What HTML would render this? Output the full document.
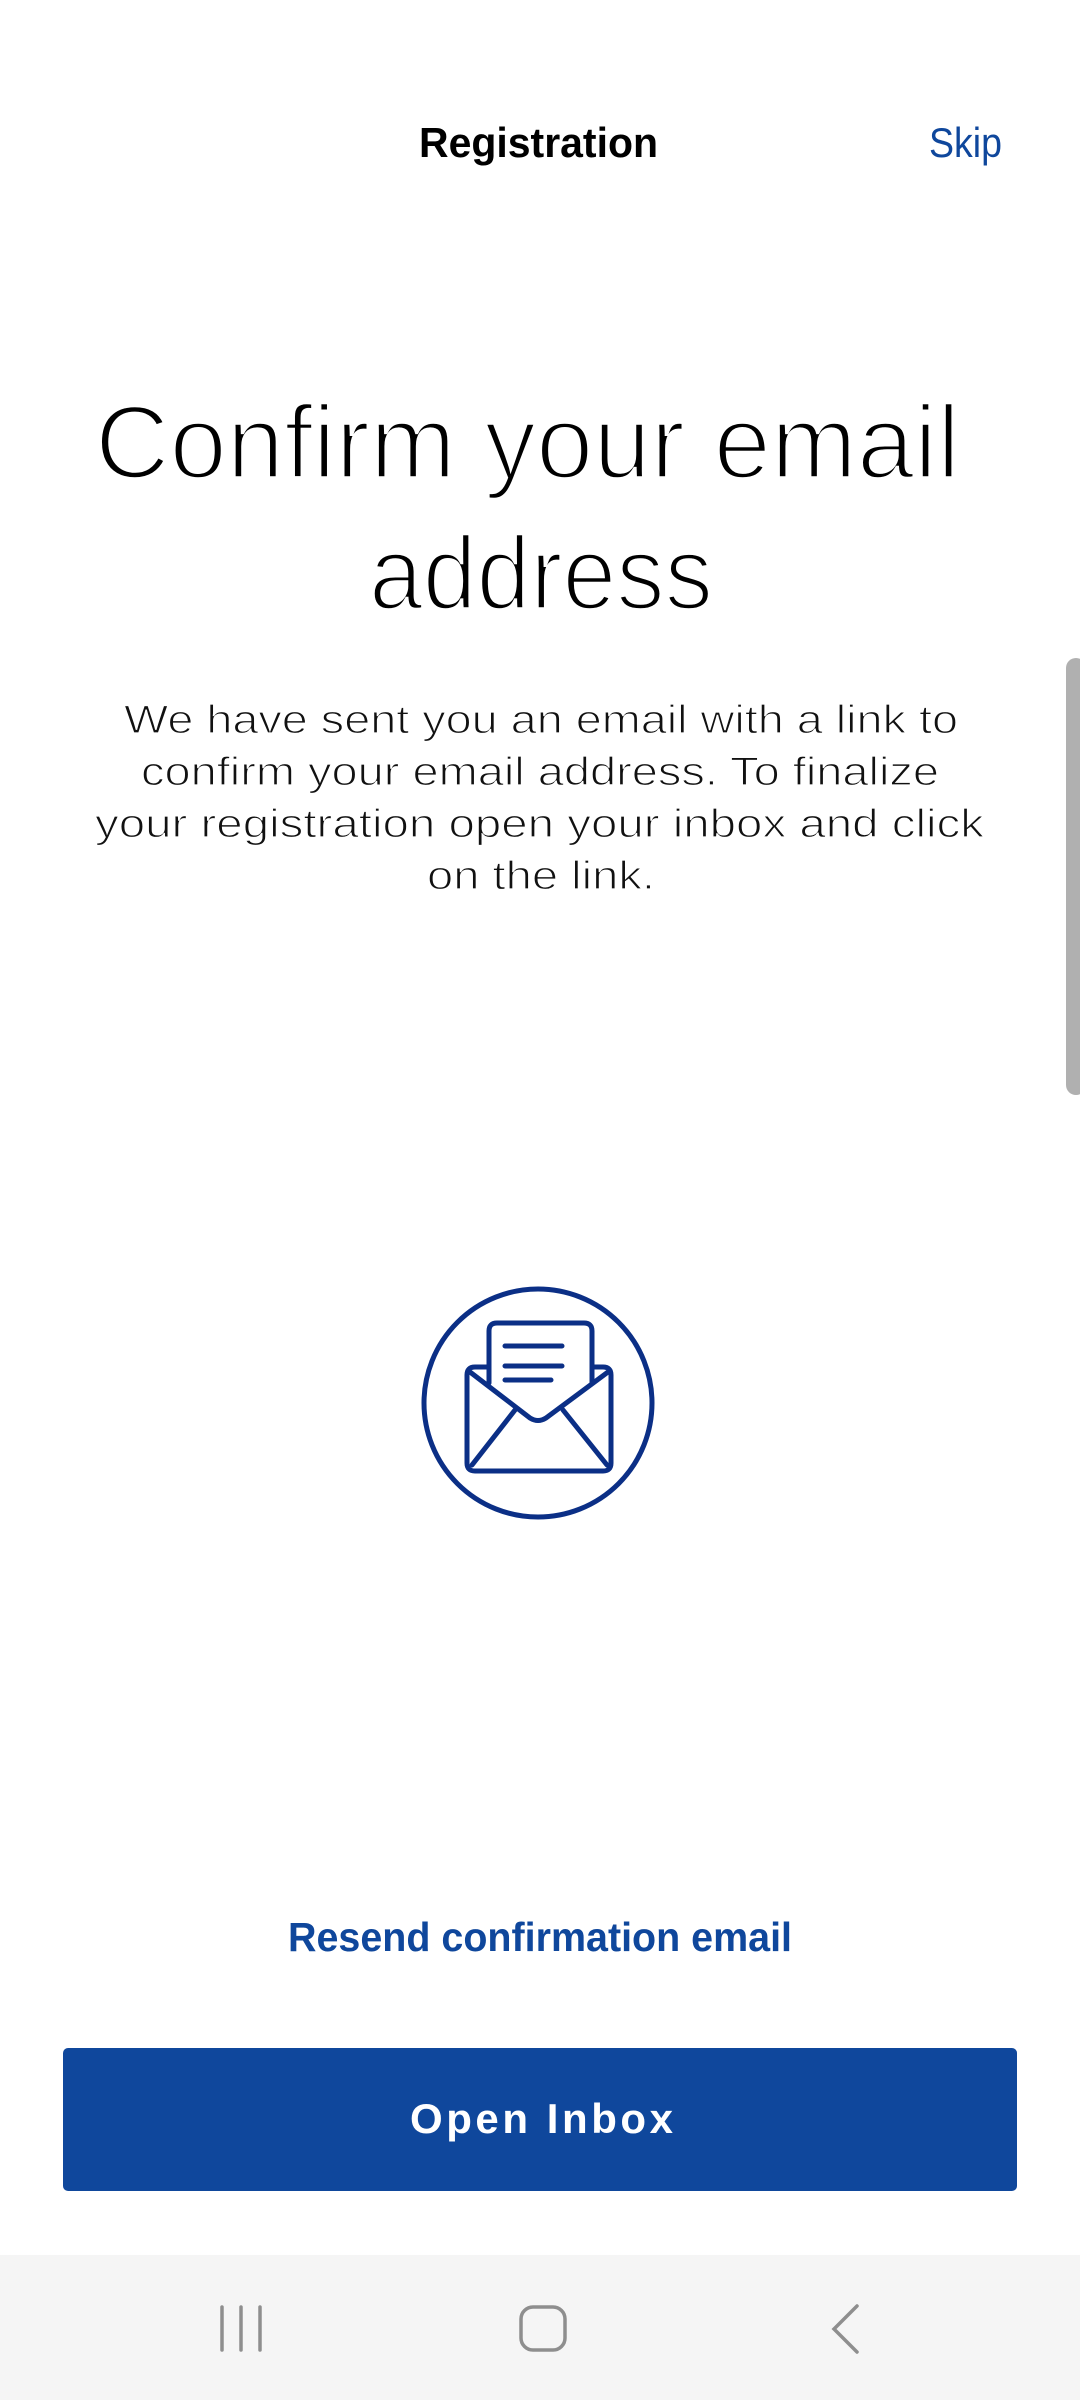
<!DOCTYPE html>
<html><head><meta charset="utf-8"><style>
html,body{margin:0;padding:0;background:#fff;width:1080px;height:2400px;overflow:hidden}
svg{display:block}
</style></head><body>
<svg width="1080" height="2400" viewBox="0 0 1080 2400" xmlns="http://www.w3.org/2000/svg">
<rect width="1080" height="2400" fill="#fff"/>
<g font-family="Liberation Sans, sans-serif">
<text x="419" y="157" font-size="42" font-weight="bold" fill="#000" textLength="239" lengthAdjust="spacingAndGlyphs">Registration</text>
<text x="929" y="157" font-size="42" fill="#0f479c" textLength="73" lengthAdjust="spacingAndGlyphs">Skip</text>
<g stroke="#fff" stroke-width="3.5">
<text x="95" y="478" font-size="104" fill="#000" textLength="865" lengthAdjust="spacingAndGlyphs">Confirm your email</text>
<text x="369" y="609" font-size="104" fill="#000" textLength="344" lengthAdjust="spacingAndGlyphs">address</text>
</g>
<g font-size="40" fill="#111" stroke="#fff" stroke-width="1.2">
<text x="124" y="733" textLength="834" lengthAdjust="spacingAndGlyphs">We have sent you an email with a link to</text>
<text x="141" y="785" textLength="798" lengthAdjust="spacingAndGlyphs">confirm your email address. To finalize</text>
<text x="95" y="837" textLength="889" lengthAdjust="spacingAndGlyphs">your registration open your inbox and click</text>
<text x="427" y="889" textLength="228" lengthAdjust="spacingAndGlyphs">on the link.</text>
</g>
<text x="288" y="1951" font-size="41" font-weight="bold" fill="#0f479c" textLength="504" lengthAdjust="spacingAndGlyphs">Resend confirmation email</text>
</g>
<rect x="1066" y="658" width="20" height="437" rx="10" fill="#b0b0b0"/>
<g fill="none" stroke="#0b2f86" stroke-width="5" stroke-linecap="round" stroke-linejoin="round">
<circle cx="538" cy="1403" r="114"/>
<path d="M489,1367 H475 q-8,0 -8,8 V1463 q0,8 8,8 H603 q8,0 8,-8 V1375 q0,-8 -8,-8 H592"/>
<path d="M489,1383 V1331 q0,-8 8,-8 H584 q8,0 8,8 V1383"/>
<path d="M470,1372 L530,1418 q8,5 16,0 L608,1372"/>
<path d="M472,1465 L515,1410 M563,1410 L607,1465"/>
<path d="M505,1346 H562 M505,1366 H562 M505,1380 H551"/>
</g>
<rect x="63" y="2048" width="954" height="143" rx="5" fill="#0f479c"/>
<text x="410" y="2133" font-family="Liberation Sans, sans-serif" font-size="42" font-weight="bold" fill="#fff" textLength="263" lengthAdjust="spacing">Open Inbox</text>
<rect x="0" y="2255" width="1080" height="145" fill="#f5f5f5"/>
<g stroke="#8e8e8e" stroke-width="3.5" fill="none" stroke-linecap="round">
<path d="M222,2307 V2350 M241,2307 V2350 M260,2307 V2350"/>
<rect x="521" y="2307" width="44" height="43" rx="12"/>
<path d="M857,2306 L834,2329 L857,2352"/>
</g>
</svg>
</body></html>
